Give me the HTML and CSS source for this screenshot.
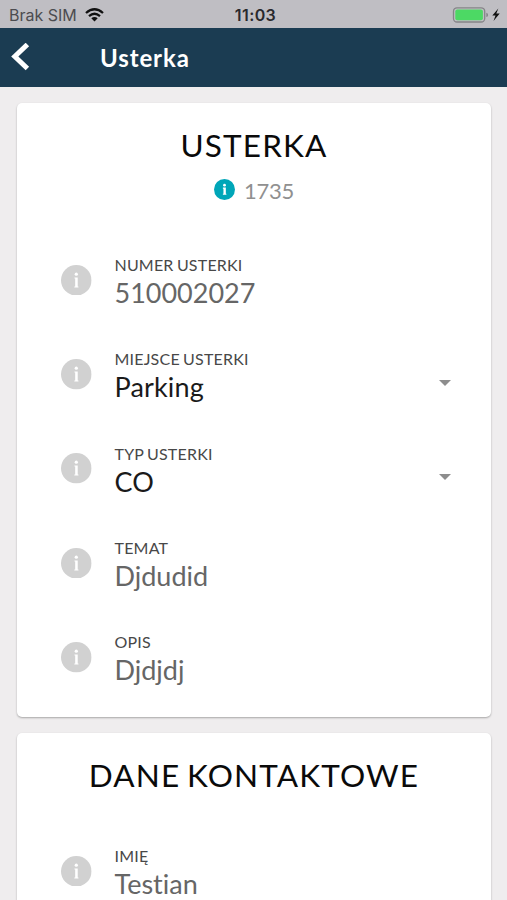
FILE: index.html
```html
<!DOCTYPE html>
<html lang="pl">
<head>
<meta charset="utf-8">
<title>Usterka</title>
<link rel="stylesheet" href="styles.css">
</head>
<body>
<svg class="defs" width="0" height="0" aria-hidden="true">
  <symbol id="info" viewBox="0 0 30 30">
    <circle cx="15" cy="15" r="15" fill="currentColor"/>
    <circle cx="15" cy="9" r="1.600" fill="#fff"/>
    <path d="M13.200 12.300h3.200v8.900h.7v.9h-4v-.9h.8v-8h-.7z" fill="#fff"/>
  </symbol>
  <symbol id="info-bold" viewBox="0 0 30 30">
    <circle cx="15" cy="15" r="15" fill="currentColor"/>
    <circle cx="15" cy="8.800" r="2" fill="#fff"/>
    <path d="M12.700 12.300h4.200v8.800h.8v1.500h-5v-1.500h.8v-7.300h-.8z" fill="#fff"/>
  </symbol>
</svg>
<div class="status">
  <div class="carrier">
    <span>Brak SIM</span>
    <svg width="19" height="14" viewBox="0 0 19 14" fill="none" stroke="#111" stroke-width="2.3">
      <path d="M1 5Q9.500-2.400 18 5"/>
      <path d="M4 8.100Q9.500 3.400 15 8.100"/>
      <path d="M9.500 13.500L6.300 10.300Q9.500 7.700 12.700 10.300Z" fill="#111" stroke="none"/>
    </svg>
  </div>
  <span class="time">11:03</span>
  <div class="power">
    <svg width="49" height="16" viewBox="0 0 49 16">
      <rect x="1.500" y=".8" width="31.200" height="14.200" rx="3.500" fill="none" stroke="#858588" stroke-width="1.300"/>
      <rect x="3.300" y="2.500" width="27.600" height="10.800" rx="2" fill="#4cd964"/>
      <path d="M34.300 5.800q1.800.4 1.800 2.100t-1.800 2.100z" fill="#858588"/>
      <path d="M46.300 1.500L40.300 8.500h3.200l-2 5.500 6.200-7.500h-3.400z" fill="#111"/>
    </svg>
  </div>
</div>
<header class="bar">
  <svg class="back" width="20" height="30" viewBox="0 0 20 30" fill="none" stroke="#fff" stroke-width="5"><path d="M17.400 1.500L4.800 13.500 17.400 25.500"/></svg>
  <span class="title">Usterka</span>
</header>
<main>
  <section class="card first">
    <h2>USTERKA</h2>
    <div class="number"><svg width="21" height="21"><use href="#info-bold"/></svg><span>1735</span></div>
    <div class="fields">
      <div class="field"><svg class="icon"><use href="#info"/></svg><div class="text"><div class="label">NUMER USTERKI</div><div class="value">510002027</div></div></div>
      <div class="field"><svg class="icon"><use href="#info"/></svg><div class="text"><div class="label">MIEJSCE USTERKI</div><div class="value dark">Parking</div></div><i class="caret"></i></div>
      <div class="field"><svg class="icon"><use href="#info"/></svg><div class="text"><div class="label">TYP USTERKI</div><div class="value dark">CO</div></div><i class="caret"></i></div>
      <div class="field"><svg class="icon"><use href="#info"/></svg><div class="text"><div class="label">TEMAT</div><div class="value">Djdudid</div></div></div>
      <div class="field"><svg class="icon"><use href="#info"/></svg><div class="text"><div class="label">OPIS</div><div class="value">Djdjdj</div></div></div>
    </div>
  </section>
  <section class="card">
    <h2>DANE KONTAKTOWE</h2>
    <div class="fields">
      <div class="field"><svg class="icon"><use href="#info"/></svg><div class="text"><div class="label">IMIĘ</div><div class="value">Testian</div></div></div>
    </div>
  </section>
</main>
</body>
</html>
```
FILE: styles.css
```css
* { box-sizing: border-box; }
body {
  margin: 0;
  height: 900px;
  overflow: hidden;
  background: #efedee;
  font-family: Lato, sans-serif;
  font-variant-ligatures: none;
}
.defs { display: none; }
svg { display: block; flex: none; }
.status {
  height: 28px;
  padding: 2px 6px 0 9px;
  display: grid;
  grid-template-columns: 1fr auto 1fr;
  align-items: center;
  background: #bfbec3;
  color: #4c4c50;
  font: 16px/24px Inter, sans-serif;
}
.carrier { display: flex; align-items: center; gap: 9px; }
.carrier svg { margin: -1px 0 0 -1px; }
.time { margin-left: 1px; color: #29292d; font-weight: 600; letter-spacing: .4px; }
.power { display: flex; justify-content: flex-end; }
.bar {
  height: 59px;
  padding-left: 10px;
  display: flex;
  align-items: center;
  background: #1b3c52;
  color: #fff;
}
.title { margin: 0 0 0 70px; font-size: 24px; font-weight: 700; letter-spacing: .9px; }
main { padding: 16.300px 16px 0 17px; display: grid; gap: 16.500px; }
.card {
  padding: 24px 40px 0 44px;
  background: #fff;
  border-radius: 5px;
  box-shadow: 0 1px 2px rgba(0, 0, 0, .3);
}
.first { height: 613.300px; }
h2 {
  margin: 0 -40px 0 -44px;
  text-align: center;
  font-size: 31.500px;
  line-height: 37px;
  font-weight: 400;
  letter-spacing: 1.150px;
  word-spacing: -2.500px;
  color: #0a0a0a;
}
.number {
  margin: 14px -40px 0 -44px;
  height: 26px;
  display: flex;
  justify-content: center;
  gap: 9px;
  color: #00a6b8;
}
.number span { font-size: 22px; line-height: 26px; letter-spacing: -.3px; color: #909090; }
.number svg { margin-top: .8px; }
.fields { margin-top: 52px; }
.first .fields { margin-top: 50.700px; }
.field { height: 94.300px; display: flex; align-items: flex-start; }
.icon { width: 30.600px; height: 30.600px; margin: 9.800px 22.900px 0 0; color: #d1d1d1; }
.text { flex: 1; }
.label { font-size: 16px; line-height: 20px; letter-spacing: .2px; word-spacing: -1px; color: #484848; }
.value { font-size: 27px; line-height: 36.400px; color: #666; }
.value.dark { color: #1a1a1a; letter-spacing: .15px; }
.caret {
  margin-top: 30.800px;
  border: 6.500px solid transparent;
  border-top-color: #8d8d8d;
  border-bottom: 0;
}
```
